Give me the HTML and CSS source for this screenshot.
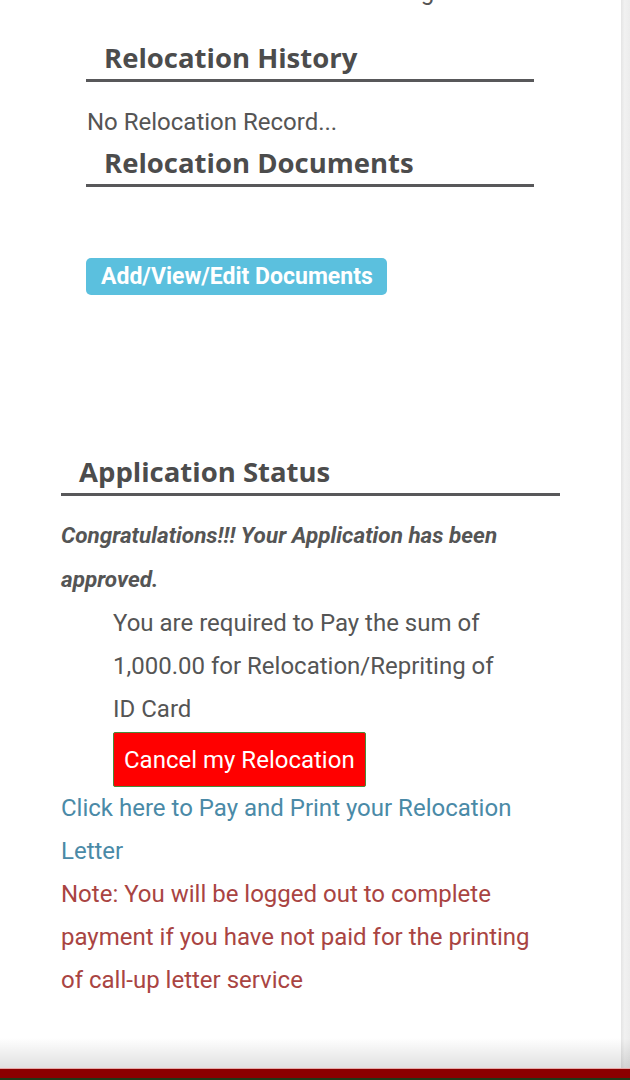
FILE: index.html
```html
<!DOCTYPE html>
<html lang="en">
<head>
  <meta charset="UTF-8" />
  <meta name="viewport" content="width=device-width, initial-scale=1.0" />
  <title>Relocation</title>
  <link rel="stylesheet" href="styles.css">
</head>
<body>
  <div class="wrap">
    <div class="page">
      <div class="content">

        <!-- relocation history + documents -->
        <div class="reloc-box">
          <p class="top-note">Relocation Processing</p>

          <h3 class="section-title history-title">Relocation History</h3>
          <p class="no-record">No Relocation Record...</p>

          <h3 class="section-title docs-title">Relocation Documents</h3>
          <a class="docs-button" href="#">Add/View/Edit Documents</a>
        </div>

        <!-- application status -->
        <div class="status-box">
          <h3 class="section-title">Application Status</h3>
          <p class="congrats">Congratulations!!! Your Application has been approved.</p>

          <div class="pay-info">
            <p>You are required to Pay the sum of 1,000.00 for Relocation/Repriting of ID Card</p>
            <button class="cancel-button">Cancel my Relocation</button>
          </div>

          <a class="pay-link" href="#">Click here to Pay and Print your Relocation Letter</a>
          <p class="note">Note: You will be logged out to complete payment if you have not paid for the printing of call-up letter service</p>
        </div>

      </div>
    </div>
    <div class="edge"></div>
  </div>
  <div class="footer-bar"></div>
</body>
</html>
```

FILE: styles.css
```css
body {
  margin: 0;
  height: 1080px;
  overflow: hidden;
  font-family: Roboto, "Liberation Sans", sans-serif;
  background-color: #fff;
  color: #555;
  display: flex;
  flex-direction: column;
}

.wrap {
  height: 1068px;
  display: flex;
  overflow: hidden;
}

.page {
  flex: 1;
  background-color: #fff;
}

.edge {
  width: 9px;
  background: linear-gradient(to right, #e4e4e4, #f1f1f1 40%, #ececec);
}

.content {
  padding: 0 61px 0 61px;
}

.reloc-box {
  padding: 0 26px 0 25px;
}

.top-note {
  margin: -20px 0 0 0;
  font-size: 24px;
  line-height: 24px;
  text-align: center;
  padding-left: 10px;
}

.section-title {
  margin: 0;
  padding: 0 0 6px 18px;
  font-family: "Open Sans", "DejaVu Sans", sans-serif;
  font-weight: 700;
  font-size: 27.5px;
  line-height: 30px;
  color: #4c4c4c;
  border-bottom: 3px solid #58585a;
}

.history-title {
  margin-top: 39px;
}

.no-record {
  margin: 28px 0 0 1px;
  font-size: 24px;
  line-height: 24px;
}

.docs-title {
  margin-top: 14px;
}

.docs-button {
  display: inline-block;
  margin-top: 71px;
  height: 37px;
  line-height: 37px;
  padding: 0 14px 0 15px;
  background-color: #5bc0de;
  color: #fff;
  font-weight: 700;
  font-size: 23px;
  text-decoration: none;
  border-radius: 5px;
}

.status-box {
  margin-top: 162px;
}

.congrats {
  margin: 17px 0 0 0;
  font-size: 22.5px;
  line-height: 44px;
  font-weight: 700;
  font-style: italic;
}

.pay-info {
  padding: 0 52px;
}

.pay-info p {
  margin: 1px 0 0 0;
  font-size: 24px;
  line-height: 43px;
}

.cancel-button {
  display: block;
  margin-top: 1px;
  height: 55px;
  padding: 0 10px;
  background-color: #f00;
  color: #fff;
  border: 1px solid #4a8a3a;
  border-radius: 2px;
  font-family: Roboto, "Liberation Sans", sans-serif;
  font-size: 24px;
}

.pay-link {
  display: block;
  font-size: 24px;
  line-height: 43px;
  color: #4a8aa7;
  text-decoration: none;
  padding-right: 20px;
}

.note {
  margin: 0;
  font-size: 24px;
  line-height: 43px;
  color: #a94442;
  padding-right: 12px;
}

.footer-bar {
  position: relative;
  height: 12px;
  background: linear-gradient(to bottom, #e8a8a8 0, #e8a8a8 1px, #8b0000 1px, #8b0000 10px, #1f3a18 10px);
}

.footer-bar::before {
  content: "";
  position: absolute;
  left: 0;
  right: 0;
  bottom: 100%;
  height: 30px;
  background: linear-gradient(to bottom, rgba(0, 0, 0, 0), rgba(0, 0, 0, 0.12));
}
```
